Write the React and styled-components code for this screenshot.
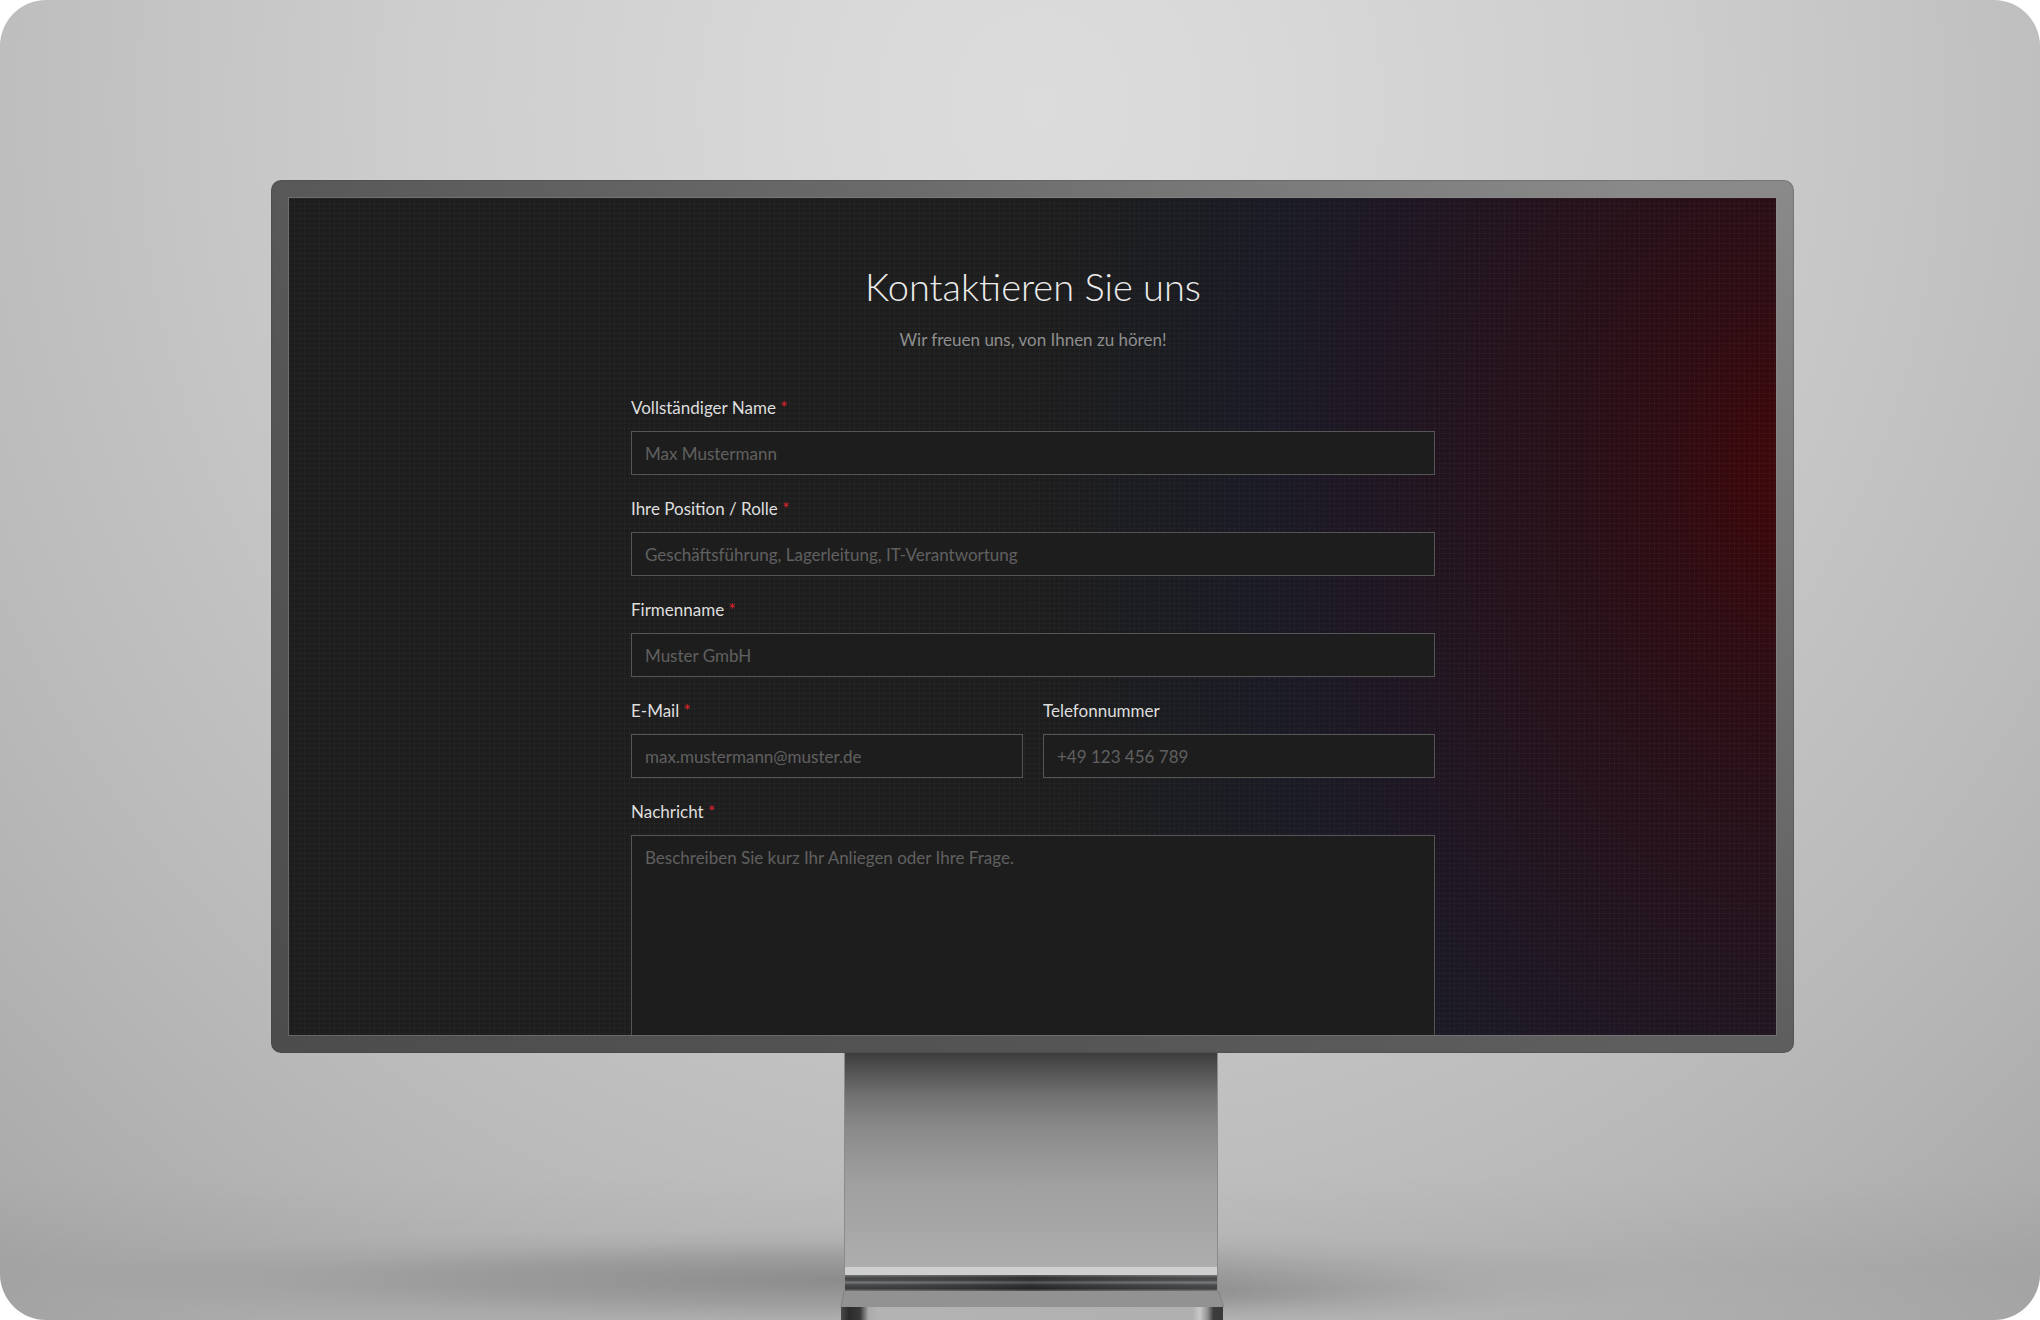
import React from 'react';
import styled, { createGlobalStyle } from 'styled-components';

const fields = [
    { id: 'name', label: 'Vollständiger Name', placeholder: 'Max Mustermann', required: true, wide: true },
    { id: 'role', label: 'Ihre Position / Rolle', placeholder: 'Geschäftsführung, Lagerleitung, IT-Verantwortung', required: true, wide: true },
    { id: 'company', label: 'Firmenname', placeholder: 'Muster GmbH', required: true, wide: true },
    { id: 'email', type: 'email', label: 'E-Mail', placeholder: 'max.mustermann@muster.de', required: true },
    { id: 'phone', type: 'tel', label: 'Telefonnummer', placeholder: '+49 123 456 789' }
];

const Stand = () => (
    <StandDrawing viewBox="0 0 384 267" aria-hidden="true">
        <defs>
            <linearGradient id="neck" x1="0" y1="0" x2="0" y2="1">
                <stop offset="0" stopColor="#3c3c3c" />
                <stop offset="0.08" stopColor="#525252" />
                <stop offset="0.2" stopColor="#727272" />
                <stop offset="0.36" stopColor="#8b8b8b" />
                <stop offset="0.6" stopColor="#9f9f9f" />
                <stop offset="1" stopColor="#adadae" />
            </linearGradient>
            <linearGradient id="sheen" x1="0" y1="0" x2="1" y2="0">
                <stop offset="0" stopColor="#fff" stopOpacity="0.08" />
                <stop offset="0.5" stopColor="#000" stopOpacity="0.16" />
                <stop offset="1" stopColor="#fff" stopOpacity="0.1" />
            </linearGradient>
            <linearGradient id="groove" x1="0" y1="0" x2="0" y2="1">
                <stop offset="0" stopColor="#6a6b6c" />
                <stop offset="0.18" stopColor="#353638" />
                <stop offset="0.34" stopColor="#3c3d3f" />
                <stop offset="0.46" stopColor="#6c6d6f" />
                <stop offset="0.62" stopColor="#38393b" />
                <stop offset="0.85" stopColor="#2a2b2d" />
                <stop offset="1" stopColor="#6a6b6c" />
            </linearGradient>
            <linearGradient id="foot" x1="0" y1="0" x2="1" y2="0">
                <stop offset="0" stopColor="#4a4a4b" />
                <stop offset="0.02" stopColor="#2b2b2c" />
                <stop offset="0.05" stopColor="#39393a" />
                <stop offset="0.072" stopColor="#aaaaab" />
                <stop offset="0.1" stopColor="#b3b3b4" />
                <stop offset="0.92" stopColor="#b0b0b1" />
                <stop offset="0.94" stopColor="#c9c9c9" />
                <stop offset="0.96" stopColor="#8f8f8f" />
                <stop offset="0.975" stopColor="#3c3c3d" />
                <stop offset="1" stopColor="#39393a" />
            </linearGradient>
        </defs>
        <rect x="4" y="0" width="374" height="238" fill="#8b8b8c" />
        <rect x="5" y="0" width="372" height="214" fill="url(#neck)" />
        <rect x="5" y="214" width="372" height="8" fill="#cfcfcf" />
        <rect x="5" y="222" width="372" height="16" fill="url(#groove)" />
        <rect x="5" y="222" width="372" height="16" fill="url(#sheen)" />
        <path d="M4 238H378L384 254H1Z" fill="#929293" />
        <path d="M4 238L1 254M378 238L384 254" stroke="#808081" />
        <rect x="1" y="254" width="382" height="13" fill="url(#foot)" />
    </StandDrawing>
);

const App = () => (
    <>
        <GlobalStyle />
        <Stage>
            <Monitor>
                <Screen>
                    <Title>Kontaktieren Sie uns</Title>
                    <Subtitle>Wir freuen uns, von Ihnen zu hören!</Subtitle>
                    <Form>
                        {fields.map(field => (
                            <Field key={field.id} $wide={field.wide}>
                                <Label htmlFor={field.id}>
                                    {field.label} {field.required && <Required>*</Required>}
                                </Label>
                                <Input id={field.id} type={field.type || 'text'} placeholder={field.placeholder} />
                            </Field>
                        ))}
                        <Field $wide>
                            <Label htmlFor="message">
                                Nachricht <Required>*</Required>
                            </Label>
                            <TextArea id="message" placeholder="Beschreiben Sie kurz Ihr Anliegen oder Ihre Frage." />
                        </Field>
                    </Form>
                </Screen>
            </Monitor>
            <Stand />
        </Stage>
    </>
);

export default App;

const GlobalStyle = createGlobalStyle`
    * {
        box-sizing: border-box;
    }
    body {
        margin: 0;
        background: #fff;
        font-family: Lato, sans-serif;
    }
`;

const Stage = styled.main`
    display: flex;
    flex-direction: column;
    align-items: center;
    min-height: 100vh;
    padding: 180px 0 0 24px;
    border-radius: 46px;
    overflow: hidden;
    background:
        radial-gradient(ellipse 40% 4% at 42% 97%, rgba(80, 80, 80, 0.4), rgba(80, 80, 80, 0.22) 45%, rgba(80, 80, 80, 0.06) 75%, rgba(80, 80, 80, 0)),
        radial-gradient(ellipse 16% 2% at 58% 98%, rgba(80, 80, 80, 0.2), rgba(80, 80, 80, 0.08) 50%, rgba(80, 80, 80, 0)),
        linear-gradient(to bottom, rgba(0, 0, 0, 0) 89%, rgba(0, 0, 0, 0.04) 96%, rgba(0, 0, 0, 0.02)),
        radial-gradient(ellipse 78% 124% at 51% 8%, #dcdcdc, #d9d9d9 12%, #cdcdcd 40%, #b8b8b8 75%, #a6a6a6);
`;

const Monitor = styled.div`
    width: 76%;
    max-width: 1523px;
    padding: 18px;
    border-radius: 10px;
    background:
        linear-gradient(to bottom, rgba(70, 70, 70, 0), rgba(70, 70, 70, 0.65)),
        linear-gradient(to right, #585858, #6a6a6a 40%, #8a8a8a 90%);
    box-shadow: inset 0 0 1px 1px rgba(60, 60, 60, 0.25);
`;

const Screen = styled.section`
    display: flex;
    flex-direction: column;
    align-items: center;
    aspect-ratio: 1487 / 837;
    padding: 64px 32px 0 34px;
    overflow: hidden;
    outline: 1px solid rgba(150, 150, 150, 0.35);
    background:
        repeating-linear-gradient(to right, rgba(255, 255, 255, 0.022) 0 1px, transparent 1px 5px),
        repeating-linear-gradient(to bottom, rgba(255, 255, 255, 0.022) 0 1px, transparent 1px 5px),
        radial-gradient(ellipse 52% 135% at 101% 33%, #3f0809, #37080c 7%, #2f0c12 15%, #290f17 26%, #23131d 42%, #1e1622 54%, #1a1a25 69%, #1b1c20 84%, #1d1d1d);
`;

const Title = styled.h1`
    margin: 0;
    font-size: 38px;
    font-weight: 300;
    line-height: 48px;
    color: #ececec;
`;

const Subtitle = styled.p`
    margin: 18px 0 0;
    font-size: 17px;
    line-height: 24px;
    color: #8e8e8e;
`;

const Form = styled.form`
    display: grid;
    grid-template-columns: 1fr 1fr;
    gap: 22px 20px;
    width: 100%;
    max-width: 804px;
    margin-top: 44px;
`;

const Field = styled.div`
    display: flex;
    flex-direction: column;
    gap: 11px;
    grid-column: ${props => (props.$wide ? '1 / -1' : 'auto')};
`;

const Label = styled.label`
    font-size: 17px;
    line-height: 24px;
    color: #dedede;
`;

const Required = styled.span`
    color: #e0222a;
`;

const Input = styled.input`
    width: 100%;
    height: 44px;
    padding: 0 13px;
    border: 1px solid #555;
    border-radius: 0;
    background: #1d1d1d;
    color: #dedede;
    font-family: inherit;
    font-size: 17px;
    line-height: 24px;
    outline: none;

    &::placeholder {
        color: #606060;
        opacity: 1;
    }
`;

const TextArea = styled(Input).attrs({ as: 'textarea' })`
    display: block;
    height: 240px;
    padding: 10px 13px;
    resize: none;
`;

const StandDrawing = styled.svg`
    display: block;
    width: 384px;
    height: 267px;
`;
